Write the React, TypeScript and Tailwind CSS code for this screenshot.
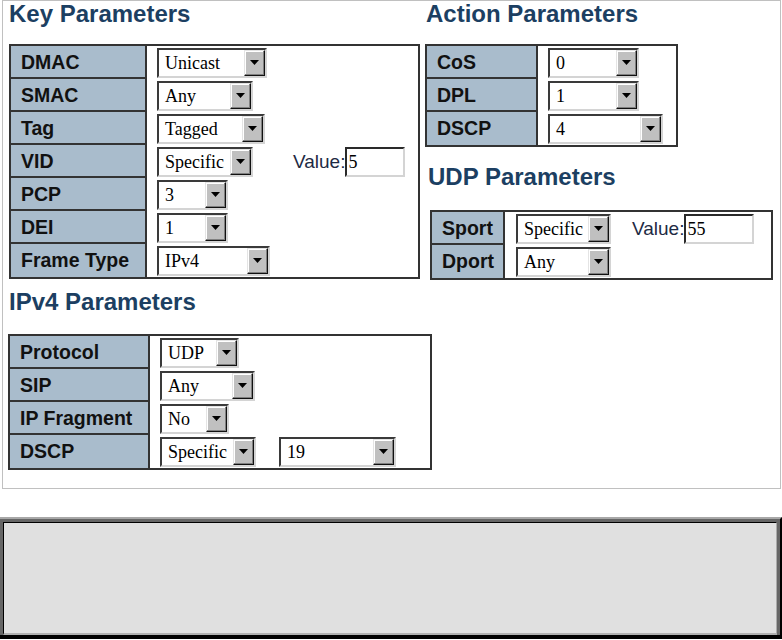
import React from 'react';

const Caret = () => (
  <svg width="9" height="5" viewBox="0 0 9 5">
    <path d="M0 0h9L4.5 5z" fill="#000" />
  </svg>
);

function Select({ value, className }: { value: string; className: string }) {
  return (
    <div
      className={`flex h-[30px] shrink-0 border-2 border-t-[#3a3a3a] border-l-[#3a3a3a] border-r-[#d4d4d4] border-b-[#d4d4d4] bg-white ${className}`}
    >
      <span className="flex-1 overflow-hidden whitespace-nowrap pl-[6px] font-['Liberation_Serif',serif] text-[18px] leading-[26px] text-black">
        {value}
      </span>
      <div className="flex h-[26px] w-[21px] shrink-0 items-center justify-center border border-t-[#e4e4e4] border-l-[#e4e4e4] border-r-[#111] border-b-[#111] bg-[#c0c0c0] shadow-[inset_-1px_-1px_#808080,inset_1px_1px_#fff]">
        <Caret />
      </div>
    </div>
  );
}

function ValueInput({ value, className }: { value: string; className: string }) {
  return (
    <div
      className={`h-[30px] shrink-0 border-2 border-t-[#2a2a2a] border-l-[#2a2a2a] border-r-[#d4d4d4] border-b-[#d4d4d4] bg-white pl-[1px] font-['Liberation_Serif',serif] text-[18px] leading-[26px] text-black ${className}`}
    >
      {value}
    </div>
  );
}

type Row = [string, React.ReactNode];

function ParamTable({
  rows,
  className,
  labelW,
  valuePad = 'pl-[10px]',
}: {
  rows: Row[];
  className: string;
  labelW: string;
  valuePad?: string;
}) {
  return (
    <div className={`border-2 border-[#333] bg-white ${className}`}>
      {rows.map(([label, value], i) => (
        <div key={label} className="flex h-[33px]">
          <div
            className={`${labelW} shrink-0 whitespace-nowrap border-r-2 border-[#333] bg-[#a9bccc] pl-[10px] text-[19.5px] font-bold leading-[32px] text-[#111] ${
              i < rows.length - 1 ? 'border-b-2' : ''
            }`}
          >
            {label}
          </div>
          <div className={`flex flex-1 items-center ${valuePad}`}>{value}</div>
        </div>
      ))}
    </div>
  );
}

const Heading = ({ children, className }: { children: React.ReactNode; className: string }) => (
  <div className={`whitespace-nowrap text-[24px] font-bold leading-[26px] text-[#1c3f62] ${className}`}>
    {children}
  </div>
);

const ValueLabel = ({ className }: { className: string }) => (
  <span className={`text-[19px] leading-[30px] text-[#1e2a44] ${className}`}>Value:</span>
);

export default function App() {
  return (
    <div className="min-h-screen bg-white font-['Liberation_Sans',Arial,sans-serif]">
      <div className="ml-[2px] flex w-[779px] border border-[#c0c0c0] pb-[18px]">
        {/* left column */}
        <div className="w-[422px] shrink-0 pl-[6px]">
          <Heading className="h-[43px]">Key Parameters</Heading>
          <ParamTable
            className="w-[411px]"
            labelW="w-[136px]"
            rows={[
              ['DMAC', <Select value="Unicast" className="w-[110px]" />],
              ['SMAC', <Select value="Any" className="w-[96px]" />],
              ['Tag', <Select value="Tagged" className="w-[108px]" />],
              [
                'VID',
                <>
                  <Select value="Specific" className="w-[96px]" />
                  <ValueLabel className="ml-[40px]" />
                  <ValueInput value="5" className="w-[60px]" />
                </>,
              ],
              ['PCP', <Select value="3" className="w-[71px]" />],
              ['DEI', <Select value="1" className="w-[71px]" />],
              ['Frame Type', <Select value="IPv4" className="w-[113px]" />],
            ]}
          />
          <Heading className="mt-[10px] h-[45px]">IPv4 Parameters</Heading>
          <ParamTable
            className="-ml-px w-[424px]"
            labelW="w-[140px]"
            rows={[
              ['Protocol', <Select value="UDP" className="w-[79px]" />],
              ['SIP', <Select value="Any" className="w-[95px]" />],
              ['IP Fragment', <Select value="No" className="w-[69px]" />],
              [
                'DSCP',
                <>
                  <Select value="Specific" className="w-[96px]" />
                  <Select value="19" className="ml-[23px] w-[117px]" />
                </>,
              ],
            ]}
          />
        </div>

        {/* right column */}
        <div className="flex-1">
          <Heading className="h-[43px] pl-[1px]">Action Parameters</Heading>
          <ParamTable
            className="w-[253px]"
            labelW="w-[111px]"
            rows={[
              ['CoS', <Select value="0" className="w-[91px]" />],
              ['DPL', <Select value="1" className="w-[91px]" />],
              ['DSCP', <Select value="4" className="w-[115px]" />],
            ]}
          />
          <Heading className="mt-[17px] h-[46px] pl-[3px]">UDP Parameters</Heading>
          <ParamTable
            className="ml-[5px] w-[343px]"
            labelW="w-[73px]"
            valuePad="pl-[11px]"
            rows={[
              [
                'Sport',
                <>
                  <Select value="Specific" className="w-[95px]" />
                  <ValueLabel className="ml-[21px]" />
                  <ValueInput value="55" className="w-[70px]" />
                </>,
              ],
              ['Dport', <Select value="Any" className="w-[95px]" />],
            ]}
          />
        </div>
      </div>

      {/* bottom panel */}
      <div className="mt-[28px] w-[782px] border-t-2 border-r-2 border-b-4 border-t-[#a8a8a8] border-r-black border-b-black">
        <div className="border-t-[3px] border-l-[3px] border-r-[3px] border-[#666]">
          <div className="h-[113px] border-t border-l border-r border-b-2 border-t-black border-l-black border-r-[#aaa] border-b-[#b0b0b0] bg-[#e0e0e0]" />
        </div>
      </div>
    </div>
  );
}
